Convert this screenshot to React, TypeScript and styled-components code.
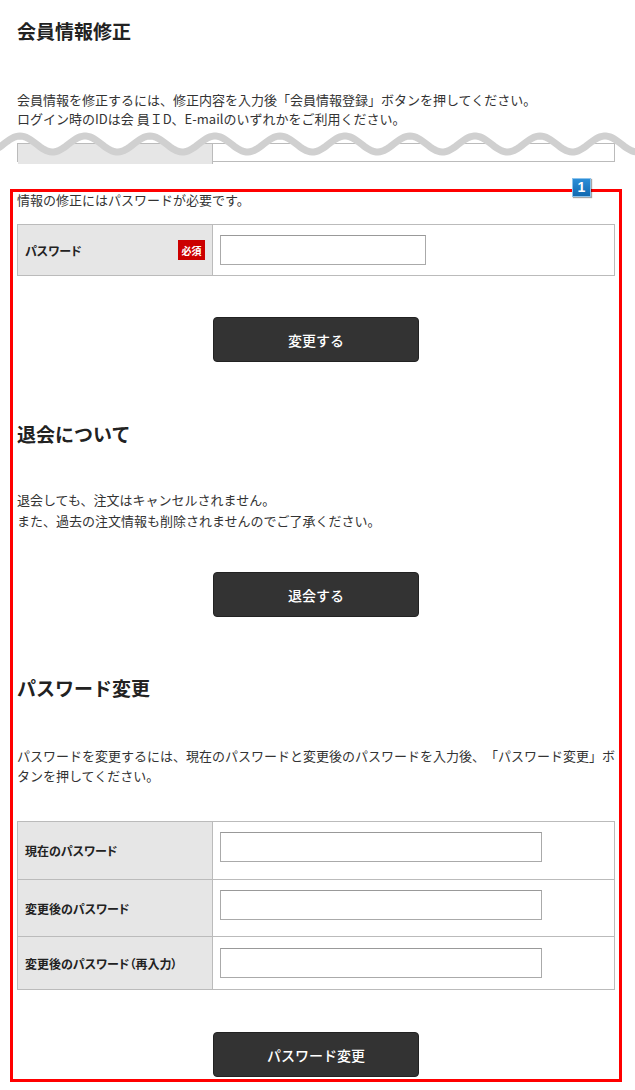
import styled, { createGlobalStyle } from 'styled-components'

const GlobalStyle = createGlobalStyle`
  body {
    margin: 0;
    background: #fff;
    font-family: "Noto Sans CJK JP", "Noto Sans", sans-serif;
    color: #333;
    text-spacing-trim: space-all;
  }
`

// wave used to show the part of the page that is cut off
const WAVE_PERIOD = 65
const wavePoints = (() => {
  const pts: string[] = []
  for (let x = -10; x <= 645; x += 2) {
    const y = 20 - 8 * Math.cos(((x - 20) / WAVE_PERIOD) * 2 * Math.PI)
    pts.push(`${x},${y.toFixed(2)}`)
  }
  return pts
})()

const Page = styled.div`
  width: 635px;
  box-sizing: border-box;
  padding: 18px 20px 0 17px;
`

const Title = styled.h1`
  margin: 0;
  font-size: 19px;
  line-height: 26px;
  font-weight: 700;
  color: #222;
`

const Heading = styled.h2<{ $top: number }>`
  margin: ${p => p.$top}px 0 0;
  font-size: 19px;
  line-height: 26px;
  font-weight: 700;
  color: #222;
`

const Text = styled.p<{ $top?: number; $lh?: number }>`
  margin: ${p => p.$top ?? 0}px 0 0;
  font-size: 13px;
  line-height: ${p => p.$lh ?? 20}px;
  color: #333;
`

const Cut = styled.div`
  position: relative;
  height: 19px;
  padding-top: 15px;
`

const WaveSvg = styled.svg`
  position: absolute;
  top: -4px;
  left: -17px;
  width: 635px;
  height: 40px;
`

const Frame = styled.section`
  position: relative;
  margin: 27px -7px 0;
  border: 3px solid #ff0000;
  padding: 0 4px 2px;
`

const Marker = styled.span`
  position: absolute;
  top: -14px;
  right: 28px;
  width: 19px;
  height: 19px;
  box-sizing: border-box;
  border: 1px solid #8cc3ec;
  background: linear-gradient(#2c8ed8, #1169b0);
  box-shadow: 1px 1px 1px rgba(0, 0, 0, 0.35);
  color: #fff;
  font: 700 14px/17px "Liberation Sans", Arial, sans-serif;
  text-align: center;
`

const Table = styled.div<{ $top?: number }>`
  margin-top: ${p => p.$top ?? 0}px;
  border: 1px solid #bbb;
  border-bottom: 0;
`

const Row = styled.div<{ $h?: number }>`
  display: grid;
  grid-template-columns: 195px 1fr;
  border-bottom: 1px solid #bbb;
  ${p => (p.$h ? `height: ${p.$h}px;` : '')}
`

const Label = styled.div`
  display: flex;
  align-items: center;
  justify-content: space-between;
  box-sizing: border-box;
  padding: 0 7px;
  background: #e6e6e6;
  border-right: 1px solid #bbb;
  font-size: 12px;
  font-weight: 700;
  color: #222;
  font-feature-settings: "palt";
`

const Field = styled.div<{ $pt?: number; $pb?: number }>`
  padding: ${p => p.$pt ?? 10}px 7px ${p => p.$pb ?? 10}px;
`

const Input = styled.input<{ $w: number }>`
  display: block;
  width: ${p => p.$w}px;
  height: 30px;
  box-sizing: border-box;
  margin: 0;
  border: 1px solid #aaa;
  border-top-color: #999;
  background: #fff;
`

const Required = styled.span`
  display: inline-flex;
  align-items: center;
  justify-content: center;
  width: 27px;
  height: 20px;
  background: #cc0000;
  color: #fff;
  font-size: 10px;
  font-weight: 700;
`

const Button = styled.button<{ $top: number }>`
  display: block;
  margin: ${p => p.$top}px auto 0;
  width: 206px;
  height: 45px;
  border: 1px solid #222;
  border-radius: 4px;
  background: #333;
  color: #fff;
  font-family: inherit;
  font-size: 14px;
  font-weight: 500;
`

const passwordRows = [
  { label: '現在のパスワード', pt: 10, pb: 17 },
  { label: '変更後のパスワード', pt: 10, pb: 16 },
  { label: '変更後のパスワード（再入力）', pt: 11, pb: 11 },
]

export default function App() {
  return (
    <>
      <GlobalStyle />
      <Page>
        <Title>会員情報修正</Title>
        <Text $top={46} $lh={19}>
          会員情報を修正するには、修正内容を入力後「会員情報登録」ボタンを押してください。
          <br />
          ログイン時のIDは会 員ＩD、E-mailのいずれかをご利用ください。
        </Text>

        <Cut>
          <Table>
            <Row $h={17}>
              <Label />
              <Field />
            </Row>
          </Table>
          <WaveSvg viewBox="0 0 635 40">
            <path d={`M-10,8 L${wavePoints.join(' L')} L645,8 Z`} fill="#fff" />
            <polyline points={wavePoints.join(' ')} fill="none" stroke="#d0d0d0" strokeWidth={7} />
          </WaveSvg>
        </Cut>

        <Frame>
          <Marker>1</Marker>
          <Text $lh={16}>情報の修正にはパスワードが必要です。</Text>
          <Table $top={16}>
            <Row>
              <Label>
                パスワード
                <Required>必須</Required>
              </Label>
              <Field>
                <Input type="password" $w={206} />
              </Field>
            </Row>
          </Table>
          <Button $top={41}>変更する</Button>

          <Heading $top={59}>退会について</Heading>
          <Text $top={42} $lh={21}>
            退会しても、注文はキャンセルされません。
            <br />
            また、過去の注文情報も削除されませんのでご了承ください。
          </Text>
          <Button $top={41}>退会する</Button>

          <Heading $top={58}>パスワード変更</Heading>
          <Text $top={45}>
            パスワードを変更するには、現在のパスワードと変更後のパスワードを入力後、「パスワード変更」ボタンを押してください。
          </Text>
          <Table $top={35}>
            {passwordRows.map(r => (
              <Row key={r.label}>
                <Label>{r.label}</Label>
                <Field $pt={r.pt} $pb={r.pb}>
                  <Input type="password" $w={322} />
                </Field>
              </Row>
            ))}
          </Table>
          <Button $top={42}>パスワード変更</Button>
        </Frame>
      </Page>
    </>
  )
}
